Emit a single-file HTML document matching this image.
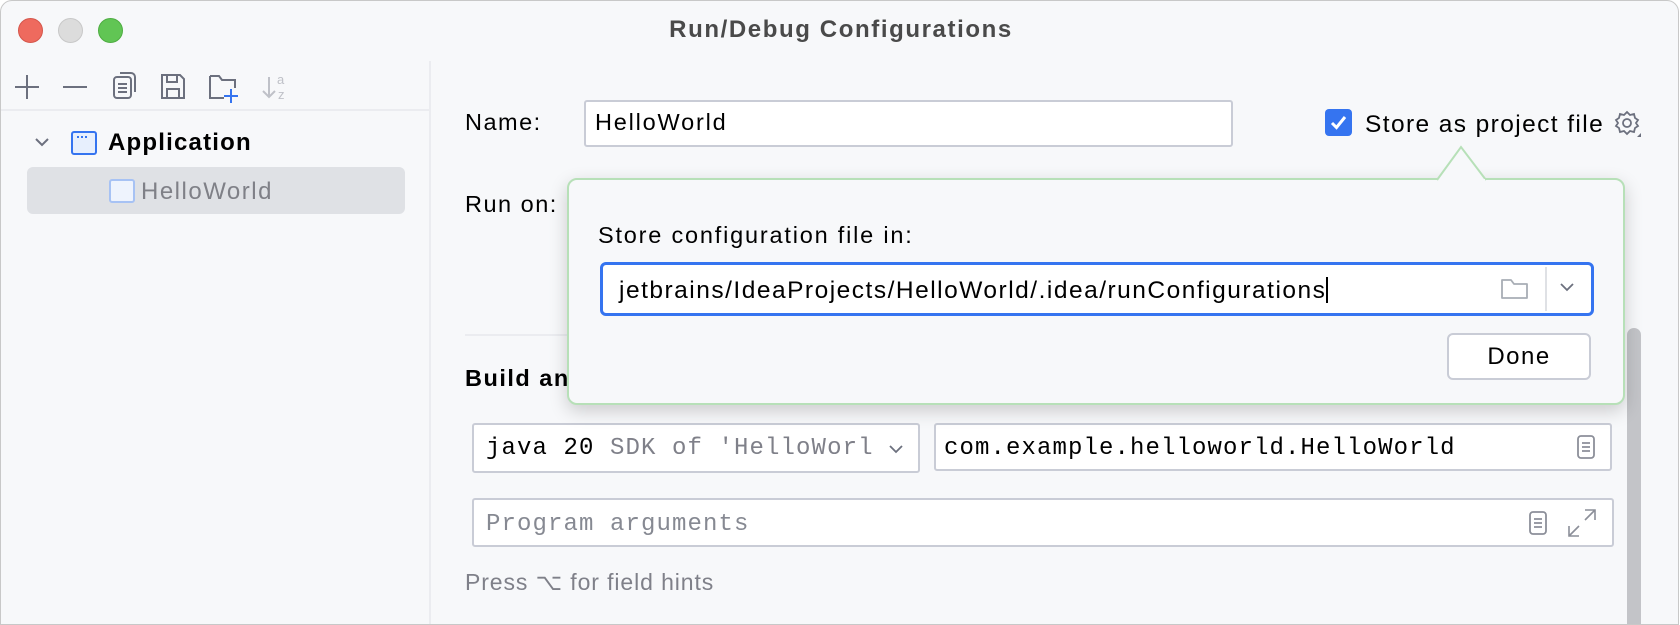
<!DOCTYPE html>
<html><head><meta charset="utf-8"><style>
*{box-sizing:border-box;margin:0;padding:0}
body{width:1680px;height:625px;background:#fff;font-family:"Liberation Sans",sans-serif;color:#000;overflow:hidden;position:relative}
.win{position:absolute;left:0;top:0;width:1679px;height:625px;background:#f7f8fa;border:1px solid #c8c8c8;border-radius:12px 12px 0 0;overflow:hidden}
.a{position:absolute}
.dot{position:absolute;top:17px;width:25px;height:25px;border-radius:50%}
.t{font-size:23.5px;white-space:nowrap;line-height:1;letter-spacing:1.5px}
.field{position:absolute;background:#fff;border:2px solid #c9ccd6;border-radius:3px}
.mono{font-family:"Liberation Mono",monospace;font-size:24px;letter-spacing:1.1px;white-space:nowrap;line-height:1}
</style></head><body>
<div class="win">
<div class="dot" style="left:17px;background:#ee6a5e;border:1px solid #d5564b"></div>
<div class="dot" style="left:57px;background:#dcdcdc;border:1px solid #c8c8c8"></div>
<div class="dot" style="left:97px;background:#61c554;border:1px solid #4ead41"></div>
<div class="a t" style="left:0;width:1680px;text-align:center;top:17px;font-weight:bold;color:#4a4a4a;font-size:24px;letter-spacing:1.6px">Run/Debug Configurations</div>

<!-- left panel -->
<div class="a" style="left:428px;top:60px;width:2px;height:565px;background:#ebecf0"></div>
<div class="a" style="left:0;top:108px;width:428px;height:2px;background:#ebecf0"></div>
<svg class="a" style="left:0;top:64px" width="320" height="44" viewBox="0 0 320 44" fill="none" stroke="#6c707e" stroke-width="2">
<path d="M26 10v24M14 22h24"/>
<path d="M62 22h24"/>
<rect x="113" y="12" width="17" height="21" rx="3"/><path d="M119 8h11a4 4 0 0 1 4 4v15" /><path d="M117 19h9M117 23h9M117 27h9"/>
<path d="M161 10h18l4 4v19h-22z"/><path d="M166 10v7h10v-7M166 33v-9h12v9"/>
<path d="M209 11h9l3 4h13v8M223 33h-14V11"/><path d="M230 24v14M223 31h14" stroke="#3574f0"/>
<path d="M268 12v20M262 26l6 6 6-6" stroke="#bfc1c8"/>
<text x="276" y="19" font-size="13" fill="#bfc1c8" stroke="none" font-family="Liberation Sans">a</text>
<text x="277" y="34" font-size="13" fill="#bfc1c8" stroke="none" font-family="Liberation Sans">z</text>
</svg>
<svg class="a" style="left:32px;top:134px" width="18" height="14" fill="none" stroke="#6c707e" stroke-width="2"><path d="M3 4l6 6 6-6"/></svg>
<div class="a" style="left:70px;top:130px;width:26px;height:24px;border:2px solid #3574f0;border-radius:3px;background:#e7effd"></div>
<div class="a" style="left:76px;top:135px;width:10px;height:2px;border-top:2px dotted #3574f0"></div>
<div class="a t" style="left:107px;top:130px;font-weight:bold;font-size:24px;letter-spacing:1.2px">Application</div>
<div class="a" style="left:26px;top:166px;width:378px;height:47px;background:#dfe1e5;border-radius:6px"></div>
<div class="a" style="left:108px;top:178px;width:26px;height:24px;border:2px solid #a7c2f4;border-radius:3px;background:#eef3fd"></div>
<div class="a t" style="left:140px;top:179px;color:#7f8087;font-size:24px">HelloWorld</div>

<!-- right -->
<div class="a t" style="left:464px;top:110px">Name:</div>
<div class="field" style="left:583px;top:99px;width:649px;height:47px"></div>
<div class="a t" style="left:594px;top:110px;letter-spacing:1.8px">HelloWorld</div>
<div class="a" style="left:1324px;top:108px;width:27px;height:27px;background:#3574f0;border-radius:4px"></div>
<svg class="a" style="left:1324px;top:108px" width="27" height="27" fill="none" stroke="#fff" stroke-width="3"><path d="M7 14l4.5 4.5L20 8"/></svg>
<div class="a t" style="left:1364px;top:112px;font-size:24.5px;letter-spacing:1.4px">Store as project file</div>
<svg class="a" style="left:1611px;top:107px" width="30" height="30" fill="none" stroke="#6c707e" stroke-width="1.8"><path d="M15 4l3 3 4-1 1 4 3 2-2 3 2 3-3 2-1 4-4-1-3 3-3-3-4 1-1-4-3-2 2-3-2-3 3-2 1-4 4 1z"/><circle cx="15" cy="15" r="4"/><path d="M29 25v4h-4z" fill="#6c707e" stroke="none"/></svg>

<div class="a t" style="left:464px;top:192px">Run on:</div>
<div class="a" style="left:464px;top:333px;width:1160px;height:2px;background:#ebecf0"></div>
<div class="a t" style="left:464px;top:366px;font-weight:bold">Build an</div>

<div class="field" style="left:471px;top:422px;width:448px;height:50px"></div>
<div class="a mono" style="left:485px;top:436px">java 20 <span style="color:#7f8089">SDK of 'HelloWorl</span></div>
<svg class="a" style="left:886px;top:442px" width="18" height="12" fill="none" stroke="#6c707e" stroke-width="1.8"><path d="M3 3l6 6 6-6"/></svg>
<div class="field" style="left:933px;top:422px;width:678px;height:48px"></div>
<div class="a mono" style="left:943px;top:436px">com.example.helloworld.HelloWorld</div>
<svg class="a" style="left:1574px;top:432px" width="22" height="28" fill="none" stroke="#8c8f99" stroke-width="1.8"><rect x="3" y="3" width="16" height="22" rx="3"/><path d="M7 10h8M7 14h8M7 18h8"/></svg>

<div class="field" style="left:471px;top:497px;width:1142px;height:49px"></div>
<div class="a mono" style="left:485px;top:512px;color:#868992">Program arguments</div>
<svg class="a" style="left:1526px;top:508px" width="22" height="28" fill="none" stroke="#8c8f99" stroke-width="1.8"><rect x="3" y="3" width="16" height="22" rx="3"/><path d="M7 10h8M7 14h8M7 18h8"/></svg>
<svg class="a" style="left:1564px;top:506px" width="34" height="32" fill="none" stroke="#8c8f99" stroke-width="1.6"><path d="M20 3h10v10M30 3L20 13M4 19v10h10M4 29l10-10"/></svg>
<div class="a t" style="left:464px;top:570px;color:#7f8089;font-size:23px;letter-spacing:0.9px">Press ⌥ for field hints</div>

<div class="a" style="left:1626px;top:327px;width:14px;height:300px;background:#c3c4c8;border-radius:7px 7px 0 0"></div>

<!-- popup -->
<div class="a" style="left:566px;top:177px;width:1058px;height:227px;background:#f7f8fa;border:2px solid #b7e0b8;border-radius:10px;box-shadow:0 6px 18px rgba(0,0,0,.18)"></div>
<svg class="a" style="left:1436px;top:142px" width="54" height="38"><path d="M0 37L24 4 49 37" fill="#f7f8fa" stroke="#b7e0b8" stroke-width="2"/><rect x="2" y="36" width="46" height="4" fill="#f7f8fa"/></svg>
<div class="a t" style="left:597px;top:223px;letter-spacing:1.8px">Store configuration file in:</div>
<div class="a" style="left:599px;top:261px;width:994px;height:54px;background:#fff;border:3px solid #3574f0;border-radius:6px"></div>
<div class="a t" style="left:618px;top:276px;font-size:24.5px;letter-spacing:1.5px">jetbrains/IdeaProjects/HelloWorld/.idea/runConfigurations<span style="display:inline-block;width:2px;height:26px;background:#000;vertical-align:-5px"></span></div>
<svg class="a" style="left:1498px;top:274px" width="32" height="28" fill="none" stroke="#a8adb5" stroke-width="1.8"><path d="M3 5h9l3 4h13v14H3z" stroke-linejoin="round"/></svg>
<div class="a" style="left:1544px;top:266px;width:2px;height:44px;background:#dfe1e5"></div>
<svg class="a" style="left:1556px;top:280px" width="20" height="14" fill="none" stroke="#6c707e" stroke-width="1.8"><path d="M4 3l6 6 6-6"/></svg>
<div class="a" style="left:1446px;top:332px;width:144px;height:47px;background:#fff;border:2px solid #c9ccd6;border-radius:6px"></div>
<div class="a t" style="left:1446px;top:344px;width:144px;text-align:center;font-size:24px">Done</div>
</div>
</body></html>
